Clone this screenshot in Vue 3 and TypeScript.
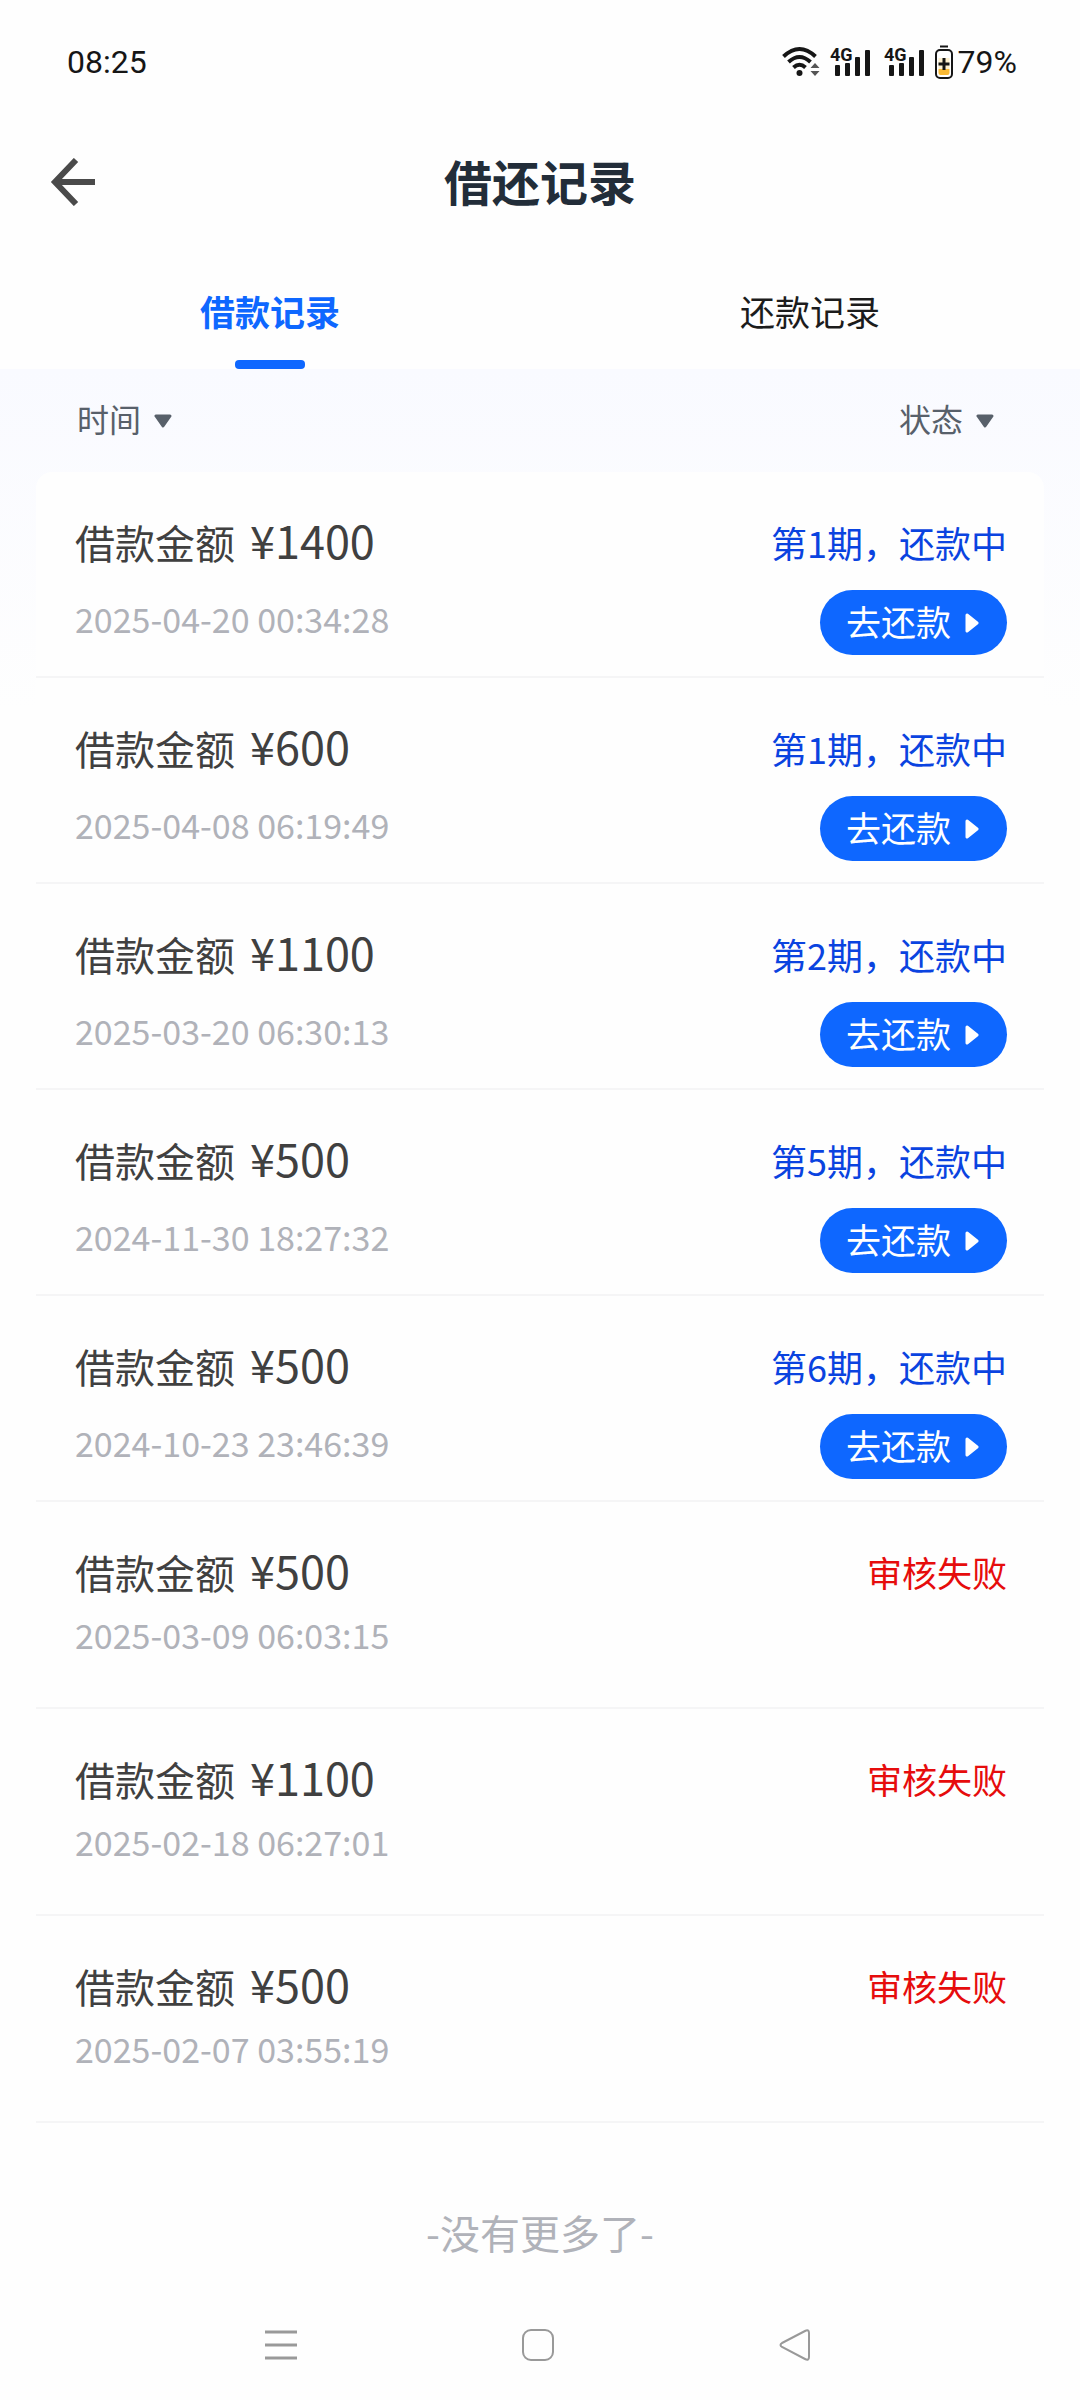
<script setup lang="ts">
import { ref } from 'vue'

interface LoanRecord {
  amount: number
  time: string
  period?: number
}

const tabs: string[] = ['借款记录', '还款记录']
const activeTab = ref(0)
const timeFilter = ref('时间')
const statusFilter = ref('状态')

// A record with a period is being repaid; one without was rejected.
const records: LoanRecord[] = [
  { amount: 1400, time: '2025-04-20 00:34:28', period: 1 },
  { amount: 600, time: '2025-04-08 06:19:49', period: 1 },
  { amount: 1100, time: '2025-03-20 06:30:13', period: 2 },
  { amount: 500, time: '2024-11-30 18:27:32', period: 5 },
  { amount: 500, time: '2024-10-23 23:46:39', period: 6 },
  { amount: 500, time: '2025-03-09 06:03:15' },
  { amount: 1100, time: '2025-02-18 06:27:01' },
  { amount: 500, time: '2025-02-07 03:55:19' },
]
</script>

<template>
  <div class="page">
    <div class="status-bar">
      <span>08:25</span>
      <div class="status-icons">
        <svg class="wifi" width="38" height="32" viewBox="0 0 38 32" aria-hidden="true">
          <g fill="none" stroke="#161616" stroke-width="4">
            <path d="M1.500 10.500Q17.500 -4.500 33.500 10.500" />
            <path d="M6.500 16Q17.500 6 28.500 16" />
            <path d="M11.500 21.500Q17.500 16 23.500 21.500" />
          </g>
          <circle cx="17.500" cy="27" r="3" fill="#161616" />
          <path d="M28.500 22L33 17L37.500 22ZM28.500 25L33 30L37.500 25Z" fill="#555" />
        </svg>
        <svg v-for="n in 2" :key="n" class="signal" width="42" height="44" viewBox="-2 -6 42 44" aria-hidden="true">
          <g fill="#161616">
            <rect x="4" y="19" width="5" height="11" rx="1" />
            <rect x="14" y="17" width="5" height="13" rx="1" />
            <rect x="24" y="11" width="5" height="19" rx="1" />
            <rect x="34" y="4" width="5" height="26" rx="1" />
            <text x="-1" y="15" font-size="18" font-weight="700">4G</text>
          </g>
        </svg>
        <svg class="battery" width="20" height="34" viewBox="0 0 20 34" aria-hidden="true">
          <path d="M6 1.500H14" stroke="#161616" stroke-width="2" />
          <rect x="2" y="5" width="16" height="28" rx="4" fill="#fff" stroke="#161616" stroke-width="2" />
          <path d="M4.500 24H15.500V28Q15.500 30 13.500 30H6.500Q4.500 30 4.500 28Z" fill="#f9b934" />
          <path d="M4.500 13H15.500V24H4.500Z" fill="#fdf0cf" />
          <path d="M10 13V25M4.500 19H15.500" stroke="#161616" stroke-width="3" />
        </svg>
        <span>79%</span>
      </div>
    </div>

    <header class="header">
      <button class="back" type="button" aria-label="返回">
        <svg width="46" height="48" viewBox="0 0 46 48" aria-hidden="true">
          <path d="M26 2L5 24L26 46M5 24H45" fill="none" stroke="#4a4a4a" stroke-width="6" />
        </svg>
      </button>
      <h1>借还记录</h1>
    </header>

    <div class="tabs" role="tablist">
      <button
        v-for="(tab, i) in tabs"
        :key="tab"
        type="button"
        role="tab"
        class="tab"
        :class="{ active: i === activeTab }"
        :aria-selected="i === activeTab"
        @click="activeTab = i"
      >
        {{ tab }}
      </button>
    </div>

    <main class="content">
      <div class="filters">
        <label class="filter">
          <select v-model="timeFilter" aria-label="时间">
            <option>时间</option>
          </select>
          <svg width="18" height="14" viewBox="0 0 18 14" aria-hidden="true">
            <path d="M2 2H16L9 12Z" fill="#58606a" stroke="#58606a" stroke-width="3" stroke-linejoin="round" />
          </svg>
        </label>
        <label class="filter">
          <select v-model="statusFilter" aria-label="状态">
            <option>状态</option>
          </select>
          <svg width="18" height="14" viewBox="0 0 18 14" aria-hidden="true">
            <path d="M2 2H16L9 12Z" fill="#58606a" stroke="#58606a" stroke-width="3" stroke-linejoin="round" />
          </svg>
        </label>
      </div>

      <ul class="list">
        <li v-for="record in records" :key="record.time" class="record" :class="{ failed: !record.period }">
          <div class="info">
            <p class="title">借款金额 <span class="amount">¥{{ record.amount }}</span></p>
            <time class="time">{{ record.time }}</time>
          </div>
          <div v-if="record.period" class="state">
            <p class="status">第{{ record.period }}期，还款中</p>
            <button class="repay" type="button">
              <span>去还款</span>
              <svg width="14" height="20" viewBox="0 0 14 20" aria-hidden="true">
                <path d="M2 2L12 10L2 18Z" fill="#fff" stroke="#fff" stroke-width="3" stroke-linejoin="round" />
              </svg>
            </button>
          </div>
          <div v-else class="state">
            <p class="status">审核失败</p>
          </div>
        </li>
      </ul>

      <p class="end">-没有更多了-</p>
    </main>

    <nav class="nav">
      <button type="button" aria-label="最近任务">
        <svg width="32" height="32" viewBox="0 0 32 32" aria-hidden="true">
          <path d="M0 3H32M0 16H32M0 29H32" stroke="#999" stroke-width="3" />
        </svg>
      </button>
      <button type="button" aria-label="主屏幕">
        <svg width="32" height="32" viewBox="0 0 32 32" aria-hidden="true">
          <rect x="1" y="1" width="30" height="30" rx="8" fill="none" stroke="#999" stroke-width="2" />
        </svg>
      </button>
      <button type="button" aria-label="后退">
        <svg width="32" height="32" viewBox="0 0 32 32" aria-hidden="true">
          <path
            d="M3 14L26 2Q30 0 30 4V28Q30 32 26 30L3 18Q0 16 3 14Z"
            fill="none"
            stroke="#999"
            stroke-width="2"
          />
        </svg>
      </button>
    </nav>
  </div>
</template>

<style>
body {
  background: #fefefe;
}
</style>

<style scoped>
.page {
  min-height: 100vh;
  display: flex;
  flex-direction: column;
  font-family: "Noto Sans CJK SC", sans-serif;
  color: #404040;
}

button,
select {
  margin: 0;
  padding: 0;
  border: 0;
  background: none;
  font: inherit;
  color: inherit;
  appearance: none;
  cursor: pointer;
}

svg {
  display: block;
  flex: none;
}

p,
h1,
ul {
  margin: 0;
  padding: 0;
}

.status-bar {
  display: flex;
  align-items: center;
  justify-content: space-between;
  height: 124px;
  padding: 0 63px 0 67px;
  box-sizing: border-box;
  font-family: Roboto, sans-serif;
  font-size: 32px;
  color: #161616;
}

.status-icons {
  display: flex;
  align-items: center;
}

.wifi {
  margin-right: 9px;
}

.signal {
  margin-right: 12px;
}

.battery {
  margin: 0 4px 0 -3px;
}

.header {
  display: grid;
  grid-template-columns: 46px 1fr 46px;
  align-items: center;
  height: 116px;
  padding: 0 50px;
}

.header h1 {
  padding-bottom: 4px;
  font-size: 48px;
  line-height: 72px;
  font-weight: 700;
  text-align: center;
  color: #222d39;
}

.tabs {
  display: flex;
  height: 129px;
}

.tab {
  flex: 1;
  display: flex;
  flex-direction: column;
  align-items: center;
  justify-content: flex-end;
  gap: 22px;
  font-size: 35px;
  line-height: 54px;
  color: #1c1c1c;
}

.tab::after {
  content: "";
  width: 70px;
  height: 9px;
  border-radius: 4px;
}

.tab.active {
  font-weight: 700;
  color: #0e67ff;
}

.tab.active::after {
  background: #0e67ff;
}

.content {
  background: linear-gradient(#f9faff, #fefefe 340px);
}

.filters {
  display: flex;
  align-items: center;
  justify-content: space-between;
  height: 103px;
  padding: 0 86px 0 77px;
}

.filter {
  display: flex;
  align-items: center;
  gap: 12px;
  font-size: 32px;
  color: #58606a;
}

.filter select {
  padding-bottom: 6px;
  line-height: 48px;
}

.list {
  margin: 0 36px;
  border-radius: 16px 16px 0 0;
  background: #fefefe;
  list-style: none;
}

.record {
  display: flex;
  justify-content: space-between;
  padding: 40px 37px 21px 39px;
  border-bottom: 2px solid #f5f5f6;
}

.info {
  display: flex;
  flex-direction: column;
  gap: 23px;
}

.title {
  font-size: 40px;
  line-height: 60px;
}

.amount {
  margin-left: 6px;
  font-size: 45px;
  line-height: 44px;
}

.time {
  font-size: 34px;
  line-height: 48px;
  color: #b0b2b9;
}

.state {
  display: flex;
  flex-direction: column;
  align-items: flex-end;
  gap: 18px;
}

.status {
  font-size: 36px;
  line-height: 60px;
  color: #0a43e0;
}

.repay {
  display: flex;
  align-items: center;
  gap: 14px;
  height: 65px;
  padding: 0 28px 0 26px;
  border-radius: 33px;
  background: #0e67ff;
  font-size: 35px;
  color: #fff;
}

.repay span {
  padding-bottom: 4px;
}

.failed {
  padding-bottom: 48px;
}

.failed .info {
  gap: 9px;
}

.failed .status {
  font-size: 35px;
  color: #e60c0c;
}

.end {
  padding: 79px 0 20px;
  font-size: 40px;
  line-height: 60px;
  text-align: center;
  color: #b0b2b9;
}

.nav {
  display: flex;
  align-items: center;
  justify-content: space-between;
  margin-top: auto;
  height: 110px;
  padding: 0 269px 0 265px;
}
</style>
